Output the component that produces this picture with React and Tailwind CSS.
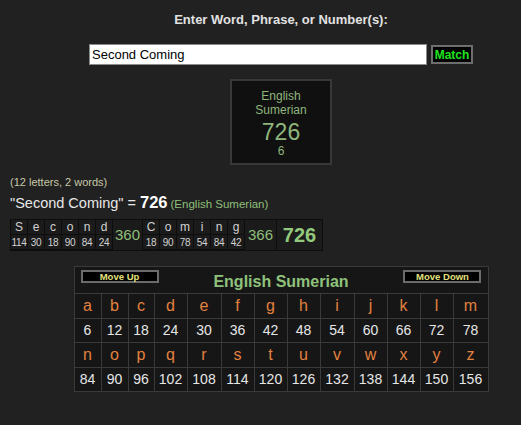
import React from 'react';

const WORDS = [
    { letters: [['S', 114], ['e', 30], ['c', 18], ['o', 90], ['n', 84], ['d', 24]], total: 360 },
    { letters: [['C', 18], ['o', 90], ['m', 78], ['i', 54], ['n', 84], ['g', 42]], total: 366 },
];

const ROW1 = ['a', 'b', 'c', 'd', 'e', 'f', 'g', 'h', 'i', 'j', 'k', 'l', 'm'];
const ROW2 = ['n', 'o', 'p', 'q', 'r', 's', 't', 'u', 'v', 'w', 'x', 'y', 'z'];

const font = { fontFamily: '"Liberation Sans", Arial, sans-serif' };

const App = () => {
    return (
        <div className="min-h-[425px] w-full bg-[#212121] pt-[12px]" style={font}>
            {/* Search */}
            <div className="flex flex-col items-center pl-[41px]">
                <h1 className="text-[13px] leading-[16px] font-bold text-[#e2e2e2]">Enter Word, Phrase, or Number(s):</h1>
                <div className="mt-[16px] flex items-center gap-[4px]">
                    <input
                        readOnly
                        value="Second Coming"
                        className="h-[21px] w-[338px] border border-[#8a8a8a] bg-white px-[2px] text-[13px] text-black outline-none"
                    />
                    <button className="h-[19px] w-[42px] border-2 border-[#6e6e6e] bg-black text-[12px] leading-[14px] font-bold text-[#1fe31f]">
                        Match
                    </button>
                </div>

                {/* Cipher box */}
                <div className="mt-[14px] flex h-[86px] w-[102px] flex-col items-center border-2 border-[#383838] bg-[#101010] pt-[8px] text-[#8fb67c]">
                    <span className="text-[12px] leading-[14px]">English</span>
                    <span className="text-[12px] leading-[14px]">Sumerian</span>
                    <span className="mt-[1px] text-[23px] leading-[28px]">726</span>
                    <span className="-mt-[2px] text-[12px] leading-[14px]">6</span>
                </div>
            </div>

            {/* Breakdown */}
            <div className="px-[10px]">
                <p className="mt-[10px] text-[11px] leading-[14px] text-[#c8c8a8]">(12 letters, 2 words)</p>
                <p className="mt-[3px] leading-[20px] text-[#e8e8e8]">
                    <span className="text-[14.5px]">"Second Coming" = </span>
                    <span className="text-[16.5px] font-bold text-white">726</span>
                    <span className="ml-[3px] text-[11.5px] text-[#8fbf7a]">(English Sumerian)</span>
                </p>
                <div className="mt-[4px] inline-flex gap-px bg-[#0d0d0d] p-px">
                    {WORDS.map((w, wi) => (
                        <React.Fragment key={wi}>
                            {w.letters.map(([ch, val], i) => (
                                <div key={i} className="flex w-[16px] flex-col gap-px">
                                    <div className="flex h-[14px] items-center justify-center bg-[#1b1b1b] text-[12px] text-[#d2d2d2]">{ch}</div>
                                    <div className="flex h-[14px] items-center justify-center bg-[#1b1b1b] text-[10px] tracking-[-0.3px] text-[#d2d2d2]">{val}</div>
                                </div>
                            ))}
                            <div className={`flex items-center justify-center bg-[#1b1b1b] text-[15px] text-[#8fbf7a] ${wi === 0 ? 'w-[29px]' : 'w-[31px]'}`}>
                                {w.total}
                            </div>
                        </React.Fragment>
                    ))}
                    <div className="flex w-[45px] items-center justify-center bg-[#1b1b1b] text-[20px] font-bold text-[#93c97d]">726</div>
                </div>
            </div>

            {/* Cipher chart */}
            <div className="flex justify-center pl-[41px]">
                <div className="mt-[15px] grid grid-cols-[26px_26px_25px_32px_33px_32px_32px_32px_33px_32px_32px_32px_34px] gap-px border border-[#3a3a3a] bg-[#3a3a3a]">
                    <div className="col-span-full flex h-[26px] items-start justify-between bg-[#161616] px-[6px] pt-[3px]">
                        <button className="h-[13px] w-[78px] border-2 border-[#6b6b6b] bg-black text-[9.5px] leading-[9px] font-bold text-[#e4e07c]">Move Up</button>
                        <span className="self-center pt-[1px] text-[16px] font-bold text-[#8ec27b]">English Sumerian</span>
                        <button className="h-[13px] w-[78px] border-2 border-[#6b6b6b] bg-black text-[9.5px] leading-[9px] font-bold text-[#e4e07c]">Move Down</button>
                    </div>
                    {ROW1.map((ch) => (
                        <div key={ch} className="flex h-[24px] items-center justify-center bg-[#161616] text-[16px] text-[#e3813f]">{ch}</div>
                    ))}
                    {ROW1.map((ch, i) => (
                        <div key={`n${ch}`} className="flex h-[23px] items-center justify-center bg-[#161616] text-[14px] text-[#e6e6e6]">{(i + 1) * 6}</div>
                    ))}
                    {ROW2.map((ch) => (
                        <div key={ch} className="flex h-[24px] items-center justify-center bg-[#161616] text-[16px] text-[#e3813f]">{ch}</div>
                    ))}
                    {ROW2.map((ch, i) => (
                        <div key={`n${ch}`} className="flex h-[23px] items-center justify-center bg-[#161616] text-[14px] text-[#e6e6e6]">{(i + 14) * 6}</div>
                    ))}
                </div>
            </div>
        </div>
    );
};

export default App;
